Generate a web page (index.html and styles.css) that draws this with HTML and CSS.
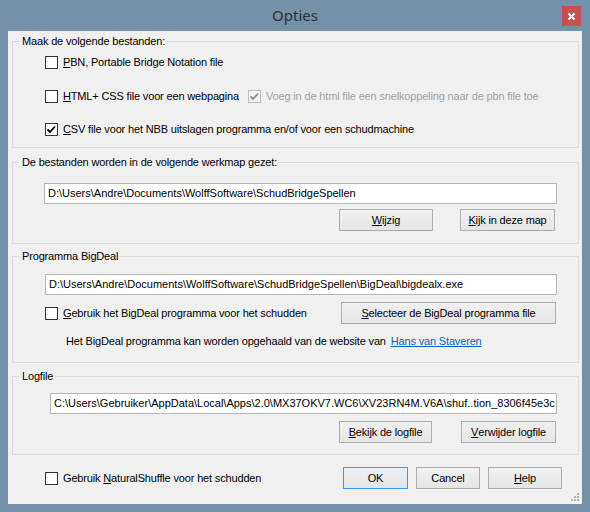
FILE: index.html
```html
<!DOCTYPE html>
<html>
<head>
<meta charset="utf-8">
<link rel="stylesheet" href="styles.css">
</head>
<body>
<div class="window">
  <div class="titlebar">
    <span></span>
    <span class="title">Opties</span>
    <span class="close"><svg width="19" height="20" viewBox="0 0 19 20"><path d="M6.5 7.5 L12.5 13.5 M12.5 7.5 L6.5 13.5" stroke="#fff" stroke-width="2"/></svg></span>
  </div>
  <div class="client">
    <fieldset class="group g1">
      <legend>Maak de volgende bestanden:</legend>
      <div class="row r1"><span class="cb"></span><span><u>P</u>BN, Portable Bridge Notation file</span></div>
      <div class="row r2">
        <span class="item w203"><span class="cb"></span><span><u>H</u>TML+ CSS file voor een webpagina</span></span>
        <span class="item disabled"><span class="cb dis"><svg width="11" height="11" viewBox="0 0 11 11"><path d="M1.5 5.5 L4 8 L9 2.5" fill="none" stroke="#8c8c8c" stroke-width="1.8"/></svg></span><span>Voeg in de html file een snelkoppeling naar de pbn file toe</span></span>
      </div>
      <div class="row r3"><span class="cb"><svg width="11" height="11" viewBox="0 0 11 11"><path d="M1.5 5.5 L4 8 L9 2.5" fill="none" stroke="#000" stroke-width="1.8"/></svg></span><span><u>C</u>SV file voor het NBB uitslagen programma en/of voor een schudmachine</span></div>
    </fieldset>

    <fieldset class="group g2">
      <legend>De bestanden worden in de volgende werkmap gezet:</legend>
      <div class="textbox tb1">D:\Users\Andre\Documents\WolffSoftware\SchudBridgeSpellen</div>
      <div class="btnrow br1">
        <span class="btn w94"><u>W</u>ijzig</span>
        <span class="btn w95"><u>K</u>ijk in deze map</span>
      </div>
    </fieldset>

    <fieldset class="group g3">
      <legend>Programma BigDeal</legend>
      <div class="textbox tb2">D:\Users\Andre\Documents\WolffSoftware\SchudBridgeSpellen\BigDeal\bigdealx.exe</div>
      <div class="row r4">
        <span class="cb"></span><span class="grow"><u>G</u>ebruik het BigDeal programma voor het schudden</span>
        <span class="btn w215"><u>S</u>electeer de BigDeal programma file</span>
      </div>
      <div class="info">Het BigDeal programma kan worden opgehaald van de website van <span class="link">Hans van Staveren</span></div>
    </fieldset>

    <fieldset class="group g4">
      <legend>Logfile</legend>
      <div class="textbox tb3">C:\Users\Gebruiker\AppData\Local\Apps\2.0\MX37OKV7.WC6\XV23RN4M.V6A\shuf..tion_8306f45e3c</div>
      <div class="btnrow br2">
        <span class="btn w93"><u>B</u>ekijk de logfile</span>
        <span class="btn w95"><u>V</u>erwijder logfile</span>
      </div>
    </fieldset>

    <div class="bottom">
      <span class="cb"></span><span class="grow">Gebruik <u>N</u>aturalShuffle voor het schudden</span>
      <span class="btn ok w65">OK</span>
      <span class="btn w64">Cancel</span>
      <span class="btn w74"><u>H</u>elp</span>
    </div>
    <svg class="grip" width="9" height="9" viewBox="0 0 9 9">
      <rect x="6" y="0" width="2" height="2" fill="#b4b4b4"/>
      <rect x="3" y="3" width="2" height="2" fill="#b4b4b4"/>
      <rect x="6" y="3" width="2" height="2" fill="#b4b4b4"/>
      <rect x="0" y="6" width="2" height="2" fill="#b4b4b4"/>
      <rect x="3" y="6" width="2" height="2" fill="#b4b4b4"/>
      <rect x="6" y="6" width="2" height="2" fill="#b4b4b4"/>
    </svg>
  </div>
</div>
</body>
</html>
```

FILE: styles.css
```css
* { box-sizing: border-box; }
html, body { margin: 0; padding: 0; }
body {
  width: 590px;
  height: 512px;
  overflow: hidden;
  font-family: "Liberation Sans", Arial, sans-serif;
  font-size: 11px;
  letter-spacing: -0.16px;
  color: #000;
}
.window {
  width: 590px;
  height: 512px;
  background: #7591a8;
  padding: 0 8px 8px 8px;
  display: flex;
  flex-direction: column;
}
.titlebar {
  height: 31px;
  flex: none;
  display: grid;
  grid-template-columns: 1fr auto 1fr;
  margin: 0 -8px;
}
.title {
  font-family: "Noto Sans", "Open Sans", sans-serif;
  font-size: 15px;
  letter-spacing: 0;
  color: #2a2f35;
  line-height: 31px;
}
.close {
  justify-self: end;
  align-self: start;
  margin-top: 6px;
  margin-right: 9px;
  width: 19px;
  height: 20px;
  background: #c75050;
  display: block;
}
.close svg { display: block; }
.client {
  flex: 1;
  background: #f0f0f0;
  padding: 0 3px 0 4px;
  position: relative;
  display: flex;
  flex-direction: column;
}
.group {
  margin: 0;
  padding: 0;
  border: 1px solid #dcdcdc;
  border-radius: 0;
  min-width: 0;
  display: flex;
  flex-direction: column;
}
.group legend {
  padding: 0 2px;
  margin-left: 7px;
  line-height: 14px;
  height: 14px;
}
.g1 { margin-top: 3px; padding-bottom: 8px; }
.g2 { margin-top: 7px; padding-bottom: 12px; }
.g3 { margin-top: 5px; padding-bottom: 14px; }
.g4 { margin-top: 6px; padding-bottom: 11px; }

.row {
  display: flex;
  align-items: center;
  height: 20px;
  padding-left: 32px;
  white-space: nowrap;
}
.r1 { margin-top: 4px; }
.r2 { margin-top: 14px; }
.r3 { margin-top: 13px; }
.r4 { margin-top: 7px; height: 22px; padding-right: 22px; }
.item { display: flex; align-items: center; }
.w203 { width: 203px; }
.disabled { color: #a0a0a0; }
.grow { flex: 1; }

.cb {
  width: 13px;
  height: 13px;
  border: 1px solid #333;
  background: #fff;
  margin-right: 5px;
  flex: none;
  display: flex;
  align-items: center;
  justify-content: center;
}
.cb svg { display: block; }
.cb.dis { border-color: #bcbcbc; background: #f4f4f4; }

.textbox {
  height: 21px;
  background: #fff;
  border: 1px solid #b5b5b5;
  line-height: 19px;
  padding-left: 3px;
  letter-spacing: 0;
  white-space: nowrap;
  overflow: hidden;
}
.tb1 { margin: 14px 0 0 31px; width: 513px; }
.tb2 { margin: 11px 0 0 32px; width: 512px; }
.tb3 { margin: 10px 0 0 37px; width: 507px; }

.btnrow {
  display: flex;
  justify-content: flex-end;
  padding-right: 23px;
}
.br1 { margin-top: 5px; gap: 27px; }
.br2 { margin-top: 7px; gap: 29px; padding-right: 22px; }

.btn {
  height: 22px;
  border: 1px solid #acacac;
  background: linear-gradient(#f0f0f0, #e5e5e5);
  display: flex;
  align-items: center;
  justify-content: center;
  white-space: nowrap;
  flex: none;
}
.btn.ok { border-color: #3399ff; }
.w64 { width: 64px; }
.w65 { width: 65px; }
.w74 { width: 74px; }
.w93 { width: 93px; }
.w94 { width: 94px; }
.w95 { width: 95px; }
.w215 { width: 215px; }

.info {
  margin-top: 10px;
  margin-left: 53px;
  line-height: 14px;
  height: 14px;
  white-space: nowrap;
}
.link { color: #0066cc; text-decoration: underline; margin-left: 2px; }

.bottom {
  margin-top: 12px;
  height: 22px;
  display: flex;
  align-items: center;
  padding-left: 33px;
  padding-right: 17px;
  gap: 8px;
  white-space: nowrap;
}
.bottom .cb { margin-right: -3px; }
.grip { position: absolute; right: 2px; bottom: 2px; }
```
